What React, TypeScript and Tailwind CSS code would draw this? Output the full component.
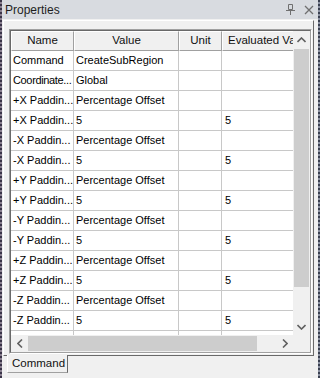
import React from "react";

const rows: [string, string, string, string][] = [
  ["Command", "CreateSubRegion", "", ""],
  ["Coordinate...", "Global", "", ""],
  ["+X Paddin...", "Percentage Offset", "", ""],
  ["+X Paddin...", "5", "", "5"],
  ["-X Paddin...", "Percentage Offset", "", ""],
  ["-X Paddin...", "5", "", "5"],
  ["+Y Paddin...", "Percentage Offset", "", ""],
  ["+Y Paddin...", "5", "", "5"],
  ["-Y Paddin...", "Percentage Offset", "", ""],
  ["-Y Paddin...", "5", "", "5"],
  ["+Z Paddin...", "Percentage Offset", "", ""],
  ["+Z Paddin...", "5", "", "5"],
  ["-Z Paddin...", "Percentage Offset", "", ""],
  ["-Z Paddin...", "5", "", "5"],
  ["", "", "", ""],
];

const Chev = ({ d }: { d: string }) => (
  <svg width="9" height="6" viewBox="0 0 9 6" className="block">
    <path d={d} stroke="#606060" strokeWidth="1.6" fill="none" />
  </svg>
);
const ChevH = ({ d }: { d: string }) => (
  <svg width="6" height="9" viewBox="0 0 6 9" className="block">
    <path d={d} stroke="#606060" strokeWidth="1.6" fill="none" />
  </svg>
);

export default function App() {
  return (
    <div
      className="w-[320px] h-[378px] bg-[#f0f0f0] flex text-black overflow-hidden"
      style={{ fontFamily: '"Liberation Sans", Arial, sans-serif' }}
    >
      <div className="w-[2px] shrink-0 bg-[repeating-linear-gradient(to_bottom,#3a3448_0px,#3a3448_2px,#8a8090_2px,#8a8090_4px)]" />
      <div className="flex-1 min-w-0 flex flex-col">
        {/* title bar */}
        <div className="h-[19px] shrink-0 bg-[#d8dbe0] flex items-center pl-[3px] pr-[4px]">
          <span className="text-[12px] leading-none text-[#1e1e1e]">Properties</span>
          <div className="ml-auto flex items-center gap-[9px]">
            <svg width="9" height="11" viewBox="0 0 9 11">
              <path d="M2.5 0.5h4v5h-4z M0 6.5h9 M4.5 6.5v4.5" stroke="#707070" strokeWidth="1" fill="none" />
            </svg>
            <svg width="10" height="10" viewBox="0 0 10 10">
              <path d="M1 1l8 8M9 1l-8 8" stroke="#707070" strokeWidth="1.3" fill="none" />
            </svg>
          </div>
        </div>
        {/* tab page */}
        <div className="pl-[1px] pr-[4px] pt-[1px]">
          <div className="h-[336px] border-t border-l border-white border-r border-b border-r-[#696969] border-b-[#696969] pt-[8px] pl-[5px] pr-[1px] pb-[1px]">
            {/* grid with sunken border */}
            <div className="h-full border border-t-[#a0a0a0] border-l-[#a0a0a0] border-r-white border-b-white">
              <div className="h-full border border-t-[#696969] border-l-[#696969] border-r-[#a0a0a0] border-b-[#a0a0a0] flex flex-col bg-white">
                <div className="flex flex-1 min-h-0">
                  {/* table area */}
                  <div className="flex-1 min-w-0 overflow-hidden flex flex-col text-[11px]">
                    <div className="flex h-[20px] shrink-0 bg-[#f0f0f0]">
                      {[
                        ["Name", "w-[63px] justify-center"],
                        ["Value", "w-[105px] justify-center"],
                        ["Unit", "w-[43px] justify-center"],
                        ["Evaluated Value", "w-[90px] justify-start pl-[5px]"],
                      ].map(([t, c]) => (
                        <div
                          key={t}
                          className={`${c} shrink-0 flex items-center whitespace-nowrap overflow-hidden border-t border-l border-white border-r border-b border-r-[#a0a0a0] border-b-[#a0a0a0] text-[#111]`}
                        >
                          <span className="text-[11.5px]">{t}</span>
                        </div>
                      ))}
                    </div>
                    {rows.map((r, i) => (
                      <div key={i} className="flex h-[20px] shrink-0 border-b border-[#c8c8c8]">
                        <div
                          className={`w-[63px] shrink-0 border-r border-[#c8c8c8] pl-[2px] flex items-center whitespace-nowrap overflow-hidden ${
                            i === 1 ? "tracking-[-0.35px]" : ""
                          }`}
                        >
                          {r[0]}
                        </div>
                        <div className="w-[105px] shrink-0 border-r border-[#c8c8c8] pl-[2px] flex items-center whitespace-nowrap overflow-hidden">{r[1]}</div>
                        <div className="w-[43px] shrink-0 border-r border-[#c8c8c8] pl-[2px] flex items-center">{r[2]}</div>
                        <div className="w-[90px] shrink-0 pl-[3px] flex items-center">{r[3]}</div>
                      </div>
                    ))}
                  </div>
                  {/* vertical scrollbar */}
                  <div className="w-[17px] shrink-0 bg-[#f0f0f0] flex flex-col items-center">
                    <div className="h-[17px] flex items-center justify-center">
                      <Chev d="M0.5 5L4.5 1l4 4" />
                    </div>
                    <div className="flex-1 w-full px-[1px] pt-[1px] pb-[31px]">
                      <div className="h-full bg-[#cdcdcd]" />
                    </div>
                    <div className="h-[17px] flex items-center justify-center">
                      <Chev d="M0.5 1L4.5 5l4-4" />
                    </div>
                  </div>
                </div>
                {/* horizontal scrollbar */}
                <div className="h-[17px] shrink-0 flex bg-[#f0f0f0]">
                  <div className="flex-1 flex items-center">
                    <div className="w-[17px] flex justify-center">
                      <ChevH d="M5 0.5L1 4.5l4 4" />
                    </div>
                    <div className="h-[15px] w-[229px] bg-[#cdcdcd]" />
                    <div className="flex-1" />
                    <div className="w-[17px] flex justify-center">
                      <ChevH d="M1 0.5l4 4-4 4" />
                    </div>
                  </div>
                  <div className="w-[17px]" />
                </div>
              </div>
            </div>
          </div>
          {/* tab */}
          <div className="ml-[4px] w-[61px] h-[18px] -mt-px bg-[#f0f0f0] border-l border-white border-r border-b border-r-[#696969] border-b-[#a0a0a0] flex items-center pl-[4px] text-[11.5px] text-[#111]">
            Command
          </div>
        </div>
      </div>
      <div className="w-[2px] shrink-0 bg-[repeating-linear-gradient(to_bottom,#3a4050_0px,#3a4050_2px,#8a90a0_2px,#8a90a0_4px)]" />
    </div>
  );
}
